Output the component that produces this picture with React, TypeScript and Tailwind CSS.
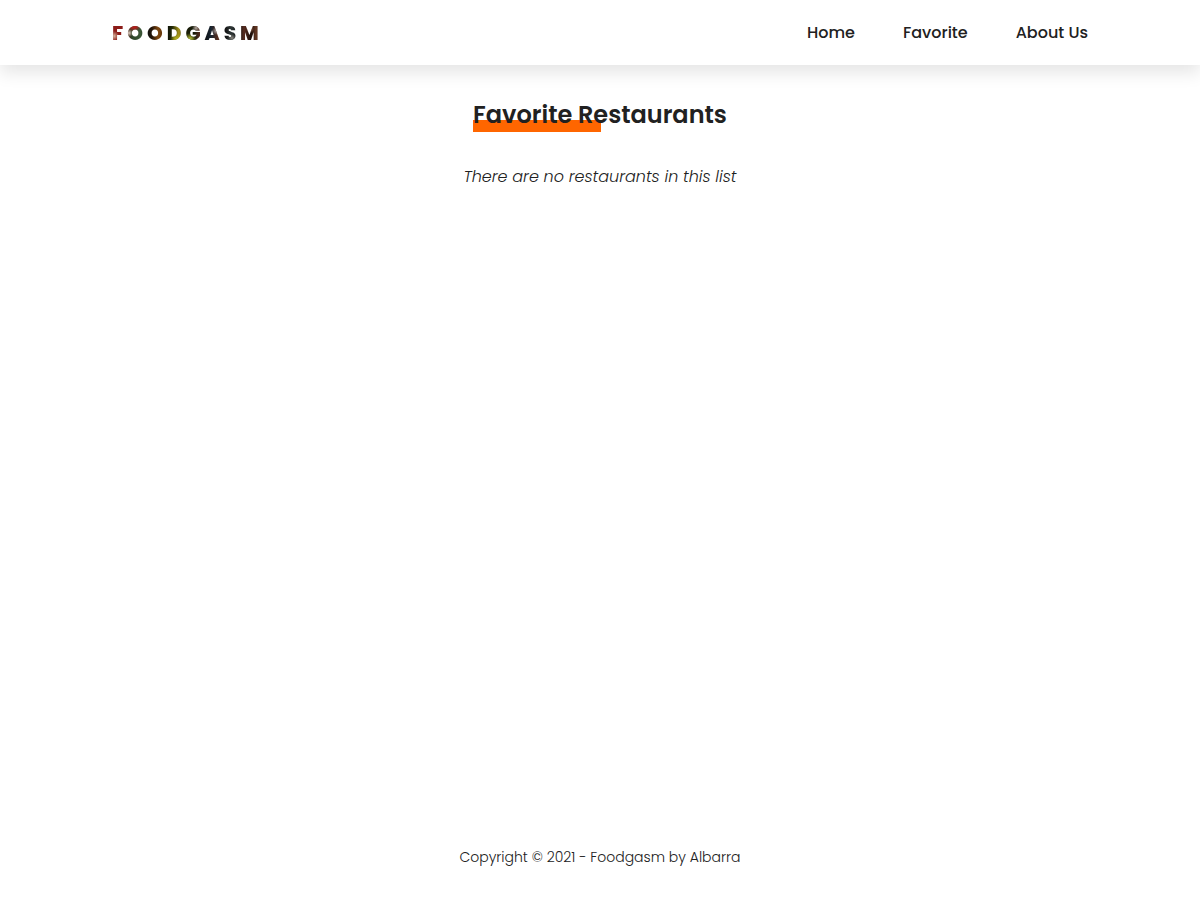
const links = [
  { label: 'Home', href: '#/home' },
  { label: 'Favorite', href: '#/favorite' },
  { label: 'About Us', href: '#/about' },
];

// Food-coloured patches that show through the letters of the logo:
// bright highlights on top of vertical bands of base colour.
const logoFill =
  'bg-[radial-gradient(circle_at_2px_17px,#d8b8a0_0px,transparent_5px),radial-gradient(circle_at_17px_14px,#e0d0c4_0px,transparent_4px),radial-gradient(circle_at_22px_6px,#b0201c_3px,transparent_7px),radial-gradient(circle_at_64px_20px,#b8b820_0px,transparent_6px),radial-gradient(circle_at_78px_20px,#a8b030_1px,transparent_6px),radial-gradient(circle_at_84px_9px,#b8aca4_0px,transparent_4px),radial-gradient(circle_at_104px_12px,#a8a09c_0px,transparent_4px),radial-gradient(circle_at_120px_19px,#8c8880_0px,transparent_4px),radial-gradient(circle_at_138px_10px,#a86a50_0px,transparent_4px),linear-gradient(90deg,#8c1c18_0px,#8c1c18_11px,#4c2018_15px,#2c4428_20px,#3c5838_29px,#0c1010_35px,#241408_40px,#804810_46px,#5c3008_51px,#101408_56px,#202808_60px,#a89418_67px,#1c2008_72px,#141808_82px,#582c20_88px,#101418_94px,#182430_99px,#582c1c_106px,#101010_113px,#303838_119px,#101010_127px,#582c20_132px,#180c08_139px,#643824_144px,#301408_150px)]';

export default function App() {
  return (
    <div className="flex min-h-screen flex-col bg-white font-['Poppins','Inter',sans-serif] text-[#212121]">
      <header className="flex h-[65px] items-center justify-between bg-white px-6 shadow-[0_8px_16px_rgba(0,0,0,0.1)] md:px-28">
        <a
          href="#/home"
          className={`bg-clip-text text-xl font-extrabold tracking-[4px] text-transparent ${logoFill}`}
        >
          FOODGASM
        </a>
        <nav aria-label="Main">
          <ul className="flex gap-12 text-base font-medium">
            {links.map((link) => (
              <li key={link.label}>
                <a href={link.href}>{link.label}</a>
              </li>
            ))}
          </ul>
        </nav>
      </header>

      <main className="flex grow flex-col items-center px-6 pt-8">
        <h1 className="bg-[linear-gradient(#ff6600,#ff6600)] bg-[length:128px_12px] bg-[position:0_23px] bg-no-repeat text-2xl leading-9 font-semibold">
          Favorite Restaurants
        </h1>
        <p className="mt-8 text-base leading-6 font-light italic">
          There are no restaurants in this list
        </p>
      </main>

      <footer className="px-6 py-8 text-center text-sm leading-[22px] font-light">
        Copyright © 2021 - Foodgasm by Albarra
      </footer>
    </div>
  );
}
